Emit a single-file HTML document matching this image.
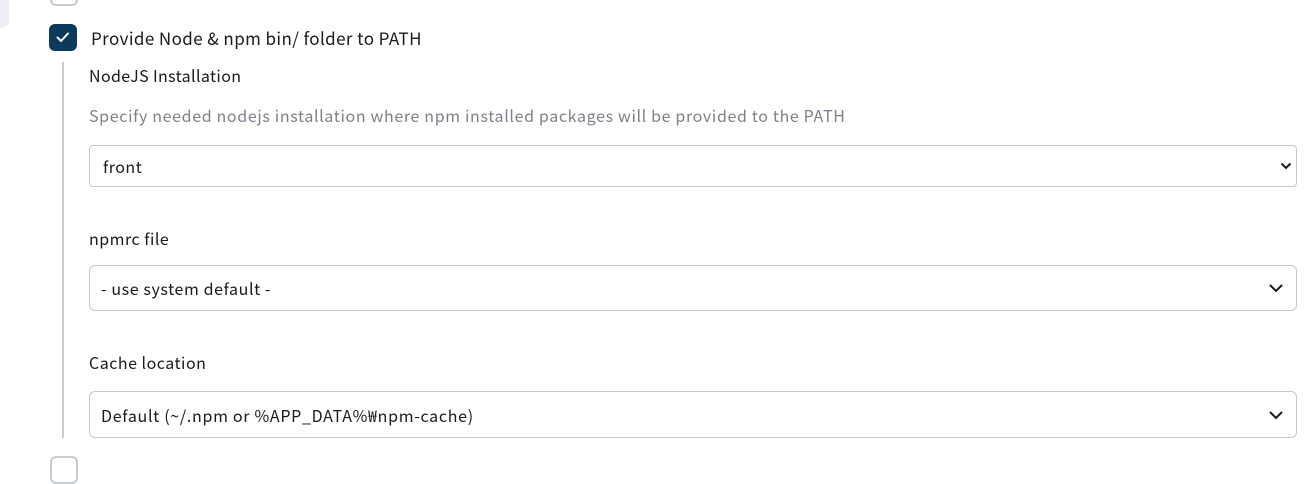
<!DOCTYPE html>
<html><head><meta charset="utf-8"><style>
body{margin:0;width:1313px;height:460px;overflow:hidden;background:#fff;font-family:"Noto Sans CJK KR","Liberation Sans",sans-serif;color:#1a1a1f;position:relative}
.a{position:absolute;line-height:22px;white-space:nowrap}
.sel{position:absolute;left:89px;width:1208px;border:1.5px solid #c3c8cc;border-radius:6px;box-sizing:border-box;font-size:16px;display:flex;align-items:center;line-height:22px}
.sel svg{position:absolute;right:12px}
</style></head><body>
<div class="a" style="left:0;top:0;width:9px;height:28px;background:#eeeef4;border-bottom-right-radius:8px"></div>
<div class="a" style="left:50px;top:-22px;width:24px;height:24px;border:2px solid #c8ccd0;border-radius:6px"></div>
<div class="a" style="left:49px;top:24px;width:28px;height:27px;background:#0b3a5c;border-radius:6px">
<svg width="28" height="27" viewBox="0 0 28 27"><path d="M8.5 13.5l3.5 3.5 7-7.5" stroke="#fff" stroke-width="2" fill="none" stroke-linecap="round" stroke-linejoin="round"/></svg></div>
<div class="a" style="left:91px;top:27px;font-size:17px;letter-spacing:0.4px">Provide Node &amp; npm bin/ folder to PATH</div>
<div class="a" style="left:62px;top:62px;width:2px;height:376px;background:#c8ccd0"></div>
<div class="a" style="left:89px;top:64px;font-size:16px;letter-spacing:0.37px">NodeJS Installation</div>
<div class="a" style="left:89px;top:104px;font-size:16px;color:#7f7f90;letter-spacing:0.65px">Specify needed nodejs installation where npm installed packages will be provided to the PATH</div>
<div class="sel" style="top:145px;height:42px;border-width:1px;border-radius:4px"><span style="margin-left:13px;letter-spacing:0.5px">front</span><svg width="12" height="8" viewBox="0 0 12 8" style="right:4px"><path d="M1.5 1.5l4.5 4.5 4.5-4.5" stroke="#1a1a1f" stroke-width="2" fill="none"/></svg></div>
<div class="a" style="left:89px;top:227px;font-size:16px;letter-spacing:0.5px">npmrc file</div>
<div class="sel" style="top:265px;height:46px"><span style="margin-left:11px;letter-spacing:0.6px">- use system default -</span><svg width="16" height="10" viewBox="0 0 16 10"><path d="M2 2l6 6 6-6" stroke="#1a1a1f" stroke-width="2" fill="none"/></svg></div>
<div class="a" style="left:89px;top:351px;font-size:16px;letter-spacing:0.5px">Cache location</div>
<div class="sel" style="top:391px;height:47px"><span style="margin-left:11px;letter-spacing:0.7px">Default (~/.npm or %APP_DATA%₩npm-cache)</span><svg width="16" height="10" viewBox="0 0 16 10"><path d="M2 2l6 6 6-6" stroke="#1a1a1f" stroke-width="2" fill="none"/></svg></div>
<div class="a" style="left:50px;top:456px;width:24px;height:24px;border:2px solid #c8ccd0;border-radius:6px"></div>
</body></html>
